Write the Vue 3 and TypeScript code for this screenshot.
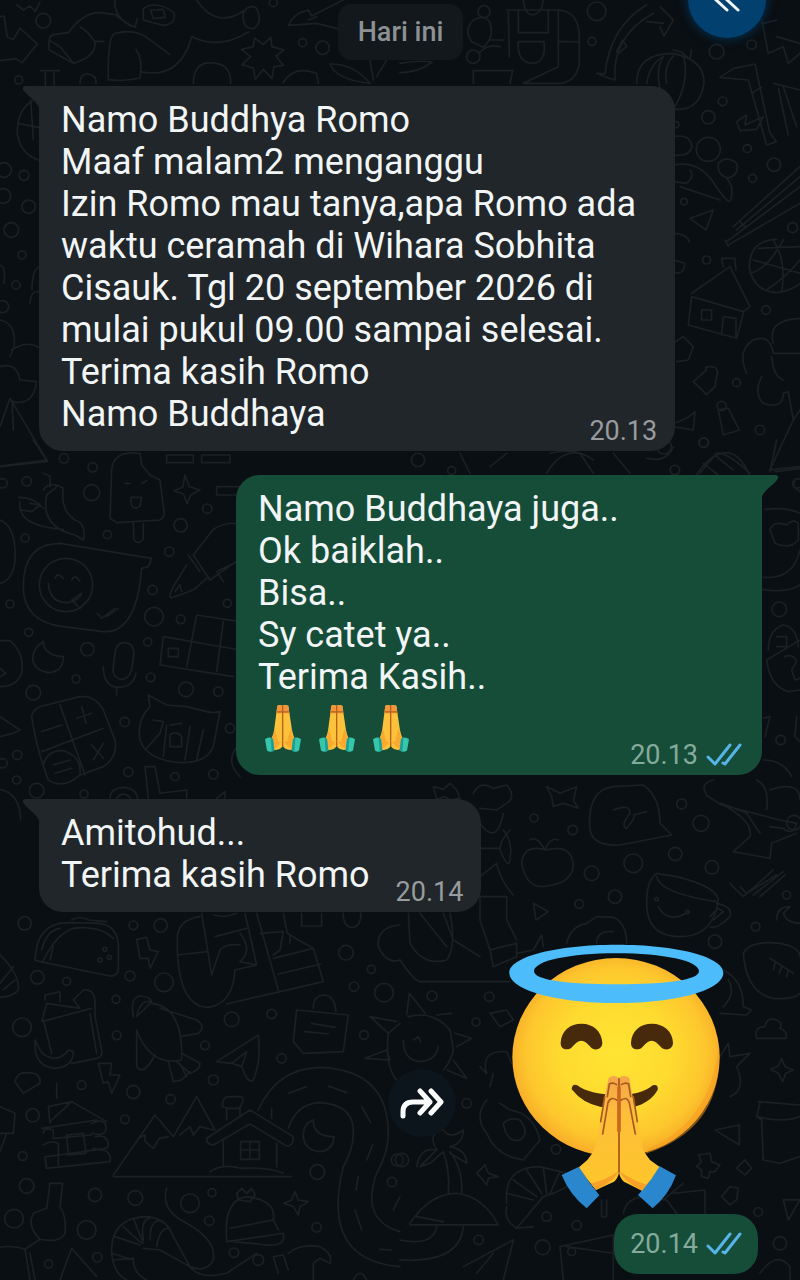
<script setup lang="ts">
interface Message {
  id: number
  side: 'in' | 'out'
  lines: string[]
  hands: number
  time: string
}

interface DoodlePatch {
  x: number
  y: number
  paths: string[]
  dots: [number, number, number][]
}

const messages: Message[] = [
  {
    id: 1,
    side: 'in',
    lines: [
      'Namo Buddhya Romo',
      'Maaf malam2 menganggu',
      'Izin Romo mau tanya,apa Romo ada waktu ceramah di Wihara Sobhita Cisauk. Tgl 20 september 2026 di mulai pukul 09.00 sampai selesai.',
      'Terima kasih Romo',
      'Namo Buddhaya',
    ],
    hands: 0,
    time: '20.13',
  },
  {
    id: 2,
    side: 'out',
    lines: ['Namo Buddhaya juga..', 'Ok baiklah..', 'Bisa..', 'Sy catet ya..', 'Terima Kasih..'],
    hands: 3,
    time: '20.13',
  },
  { id: 3, side: 'in', lines: ['Amitohud...', 'Terima kasih Romo'], hands: 0, time: '20.14' },
]

const doodles: DoodlePatch[] = [
  {
    x: 0,
    y: 0,
    paths: [
      'M0 50L12 48L22 112L40 118L60 84L112 132L66 188L48 176L0 182',
      'M50 14L70 30L90 18L106 34L120 6M345 0Q340 56 405 82L412 56M205 98Q250 36 300 38L345 44L392 78',
      'M205 98L160 104Q142 110 148 150L220 190Q290 170 285 125Q262 92 240 80M150 122L180 140L220 188M285 125L312 124',
      'M325 240Q322 110 345 100Q400 86 440 112L510 164M408 148Q430 180 420 234Q360 246 325 238M420 215Q540 240 575 110Q660 150 745 96',
      'M430 25Q470 0 522 38Q530 72 490 76L430 60ZM452 30L490 28L496 52L460 56ZM590 0Q650 90 735 30M730 40Q745 10 770 25Q790 70 760 86Q725 86 730 40',
      'M580 250Q580 190 630 188Q695 190 692 250M865 76Q880 40 925 30L935 48L1030 0M865 76L950 70L1020 88M925 60L950 50',
      'M760 140L764 114L790 134L812 112L816 140L852 150L828 168L850 196L822 200L816 236L790 208L766 238L760 204L726 194L752 170L724 148Z',
      'M850 248Q880 195 950 220L955 250M990 192Q1060 190 1110 250Q1010 240 990 192ZM1120 240L1110 180M1130 230L1160 180',
      'M122 212H178M136 216V255M162 216V255M240 250Q240 220 265 222Q290 226 288 250',
      'M100 300Q50 330 52 400Q60 460 115 480M55 370L115 382M92 300L100 420',
    ],
    dots: [[130, 62, 22], [56, 240, 12], [908, 128, 12], [968, 143, 20], [820, 8, 12], [12, 510, 22], [72, 526, 15], [10, 588, 22], [86, 620, 20], [34, 690, 22], [66, 765, 12], [48, 855, 12], [8, 920, 18]],
  },
  {
    x: 0,
    y: 260,
    paths: ['M0 15Q18 20 12 70M0 180Q50 190 42 260L30 290M35 270Q80 240 116 262M0 320Q50 305 60 360M65 360L110 365Q100 440 35 425M0 500L30 415L140 600L0 618M36 420L40 510M96 90Q96 30 118 20M90 130Q92 90 118 95'],
    dots: [],
  },
  {
    x: 400,
    y: 0,
    paths: [
      'M0 190Q60 180 96 186Q60 216 0 218M370 0Q375 46 400 45Q425 40 430 0M320 30H470Q540 30 538 120V190Q530 245 480 250H370L475 200V30M325 35L328 170M355 30V98H445V30M355 125H432Q440 190 395 190Q350 185 355 125ZM475 124L538 126',
      'M272 70Q255 40 220 60Q190 90 215 125L250 142Q285 110 270 70M270 120H312M238 160Q260 130 300 140M220 250V212H338L330 250',
      'M590 220L615 222Q630 80 740 14M600 225L645 240Q635 110 760 40M650 155L668 120L680 140L655 160ZM780 20L820 60L792 108L780 80M740 65L790 70',
      'M710 250Q710 160 820 160Q915 180 912 250Q900 330 830 328Q770 320 745 260M740 250Q750 190 790 170M800 250Q790 200 820 168M850 165Q870 240 825 320M790 170Q760 220 790 290',
      'M820 150L845 156L870 178L875 150M960 232L1000 206L1065 192L1110 400L1130 425L1100 435L1045 240L960 232M1055 280L1085 262M1010 365L1040 345L1035 375L1090 350L1070 388L1020 392ZM1120 250L1200 270M1135 265L1165 405M1150 260L1190 380M1085 60L1105 160L1150 140L1165 190L1200 160M1130 110L1200 130M1090 70L1130 60',
      'M820 410Q870 400 876 440Q870 470 825 465M820 495Q900 480 945 555Q990 620 992 600Q1005 560 980 535M820 545L860 550Q885 530 870 510M840 560L960 600M955 490Q980 465 1010 490Q1018 525 985 534Q950 525 955 490Z',
      'M870 655L940 630L918 690ZM1000 680L1200 500M1010 690L1200 530M980 725L1200 560M985 735L1200 610M975 720L985 740M1020 665L1035 680',
      'M1130 718Q1050 720 1048 800Q1060 875 1130 878Q1180 870 1200 850M1060 780L1200 820M1075 745L1200 740M1120 720Q1160 780 1145 878M1050 820Q1100 810 1150 720M1100 870Q1160 830 1200 780',
      'M875 880L990 800L1050 920L1030 935L875 890L865 975L1010 1015L1030 940M905 930H935V960H905ZM965 1005L970 950L1008 955V1012M970 800L965 775H1005L1008 810',
      'M1040 1120Q1010 1050 1060 1020Q1110 1000 1120 1060Q1140 1060 1200 1060M1120 1030Q1100 960 1200 955M1115 1070Q1120 1130 1150 1140M1085 1130Q1060 1180 1090 1210Q1150 1230 1150 1180L1165 1175L1180 1260L1200 1230M1180 1260L1110 1410L1200 1400',
      'M820 1030L850 1010L880 1040L865 1080L830 1085M880 1145L920 1110Q910 1100 930 1100Q960 1100 950 1130L945 1160L920 1184ZM820 1280L880 1290L885 1235Q860 1260 820 1270M955 1230L985 1225L1018 1290L970 1305ZM820 700Q860 700 868 725M820 780L855 790Q850 830 820 815',
      'M180 1360L210 1420M270 1400L320 1360M440 1420Q480 1350 540 1360L580 1420M450 1360Q530 1340 580 1380M640 1360L690 1420M900 1420L950 1360Q980 1355 1050 1420M820 1340Q800 1390 740 1375',
    ],
    dots: [[590, 34, 28], [576, 124, 12], [252, 35, 18], [220, 170, 20], [968, 304, 13], [925, 352, 20], [925, 448, 36], [828, 374, 9], [1042, 446, 12], [1122, 494, 20], [1058, 535, 12], [852, 605, 10], [1178, 683, 15], [920, 780, 12], [1098, 930, 13], [1010, 1148, 12], [965, 1218, 14], [1080, 1290, 14], [910, 1328, 14], [54, 1380, 20], [155, 1412, 12], [1055, 134, 14], [950, 155, 22]],
  },
  {
    x: 0,
    y: 440,
    paths: [
      'M100 0L142 64L0 80M500 45H580V68H500ZM605 45H690V68H605ZM720 140H650V165H720',
      'M420 40Q340 30 335 90L330 235L350 248L480 240Q498 230 490 200L480 120L450 105L425 75ZM400 250L402 300Q415 315 430 298V250M392 172L395 198Q408 210 420 198L425 172ZM375 130H392M425 130L440 122',
      'M55 172Q100 170 130 205M60 185Q50 260 190 268M65 210L95 215L120 195L90 190M130 150Q150 120 190 145Q180 210 225 240Q260 250 250 300L225 285Q120 260 140 165L170 140M130 100L150 108V140',
      'M555 105L568 140L600 150L572 165L562 190L550 162L522 152L548 142Z',
      'M70 440Q70 310 180 310L455 355L445 380L425 385Q410 580 310 575L190 560Q70 545 70 440ZM145 430Q150 490 205 488Q240 480 245 460L215 480L240 505L268 475M165 415Q170 395 190 415M215 420Q225 400 240 425M292 520L305 535L345 505M320 530L355 505',
      'M580 345L640 268Q690 240 720 255M580 345L630 420L700 370M565 345L600 395M560 375L520 440Q500 480 520 472L580 450L620 415M525 455L540 435L545 455M650 395L720 360M655 400L670 425',
      'M590 525L720 545M490 590L720 630M480 675L700 710M490 590L480 675M590 525L560 680M670 545L650 695M505 625H535V650H505Z',
      'M130 605Q130 645 190 650Q190 695 145 698Q100 690 98 655Q100 620 130 605M345 640Q350 605 375 608Q400 610 402 640L395 690Q385 720 360 718Q335 710 340 680ZM310 680Q310 740 355 742Q400 740 408 700M350 742V765M0 602H30Q75 640 65 700Q50 740 0 740M0 830L60 870L40 880L0 890M0 685L18 700L0 710',
      'M95 830Q100 800 140 795L240 770Q285 765 310 810L345 900Q355 950 310 980L240 1005Q190 1050 145 1020Q110 930 95 830ZM180 795L255 1005M125 935L310 865M125 875L185 855M230 835L275 820M245 800L258 850M275 915L310 955M310 910L280 960M130 975Q140 930 190 932Q245 950 240 1000M160 975L210 960M165 1000L215 985',
      'M445 765L450 800Q410 840 420 900Q440 960 540 968Q620 970 640 920L660 815Q640 820 620 815L560 800L500 795L445 765M460 840L490 845L480 880L440 925M500 855L490 950M570 860L555 960M610 870L590 960M510 855L545 850M510 885Q530 870 545 890V920H510Z',
      'M720 910Q670 960 720 1010M435 980H465L480 1060L560 1050V1075M435 980L445 1075M330 1075Q330 1045 370 1042Q410 1045 412 1075M350 1075Q370 1050 392 1075M650 1075L675 1055V1075M0 1048Q60 1060 62 1140M0 240Q50 260 45 360Q40 420 0 430',
    ],
    dots: [[192, 55, 14], [278, 82, 14], [275, 158, 24], [80, 124, 14], [8, 130, 14], [75, 294, 12], [322, 284, 12], [542, 256, 20], [622, 206, 14], [508, 335, 14], [30, 492, 12], [458, 450, 14], [462, 530, 28], [542, 538, 13], [86, 577, 12], [262, 628, 20], [228, 717, 12], [443, 606, 12], [452, 712, 13], [558, 748, 22], [655, 755, 14], [100, 758, 22], [374, 846, 14], [52, 945, 14], [8, 970, 14], [50, 1020, 12], [385, 996, 14], [525, 1010, 12], [640, 1003, 14], [110, 1052, 22], [252, 1062, 12], [682, 490, 12], [690, 865, 14], [198, 435, 80]],
  },
  {
    x: 660,
    y: 440,
    paths: [
      'M350 0L330 95M110 105Q150 40 200 38Q240 40 268 105M130 70L175 105M170 50L220 90M315 208Q380 200 420 220M310 412Q400 420 420 330M306 448Q380 460 420 435M330 270Q340 240 380 255Q400 235 415 250V300Q390 330 345 310ZM325 630Q325 570 370 555Q410 560 415 620M350 590H380V620H350M320 660Q330 740 385 755L420 750M320 660L420 600M375 650Q400 640 410 665L395 690L405 720L420 715M310 835L330 830L315 890M410 830L405 890L420 905M310 960Q370 960 395 1010M405 120L400 140L420 155M345 95L420 85',
    ],
    dots: [[358, 508, 22], [362, 900, 14], [132, 8, 14], [45, 90, 14], [412, 130, 14], [12, 20, 22]],
  },
  {
    x: 0,
    y: 900,
    paths: [
      'M105 180Q110 70 200 68L300 70Q355 80 355 140V210Q350 230 330 228L120 185ZM130 182Q170 100 220 85Q300 75 340 115M125 150Q140 90 180 85M150 180L160 140M215 60Q240 45 265 60L320 65M0 165L15 180Q60 230 55 270Q40 290 0 292M0 250L40 200M10 270L45 240',
      'M410 118L440 112L450 150L475 155L450 205L445 175L420 175Z',
      'M605 40L635 225L660 150Q680 130 720 135M600 50Q530 60 532 120Q530 320 625 322Q700 310 705 210L770 195L735 40M532 165L620 155M645 110L740 85M640 45Q680 55 710 40M720 100Q760 150 720 185L770 195M770 40L835 270M780 100L850 95L840 150L820 165M850 40L862 100L895 120L940 145L970 245L680 312M820 175L940 145M835 222L962 192M905 40V78H965V40M1030 40Q1030 85 1060 82Q1085 75 1082 40M1200 75Q1130 80 1135 140Q1160 195 1200 180M870 110V130',
      'M125 365L140 310L240 325L220 300L250 270Q285 265 285 310V350L305 450Q310 470 290 475L215 490M125 365L275 325M130 360L155 460M270 340L290 460M135 300V285L180 275V305M105 420V445Q110 500 165 505Q220 500 220 455L205 450Q190 475 160 475Q130 470 120 450Z',
      'M400 350Q390 290 420 288Q450 290 455 305L415 345M410 350Q420 300 450 305M455 310Q550 320 545 480Q450 500 410 390V500Q430 530 465 465M480 325L590 360Q620 380 595 400L540 410M545 460L600 490Q600 510 570 520L530 485M505 485L520 545L545 540L570 515M540 490L560 530',
      'M650 485L775 405Q785 480 760 540Q745 555 725 500L695 490L650 485M725 500L740 455L695 490M890 330L1045 345L1030 455L910 460L880 425ZM940 325Q940 285 975 285Q1005 290 1008 335M935 370L1005 382M915 395L985 402M1110 350L1190 365M1110 350L1165 400L1200 370M1095 475L1160 450L1170 480ZM1165 400Q1155 500 1190 540',
      'M45 545Q50 515 85 518Q125 520 120 550L70 580ZM295 490H335L330 525L360 525L335 580L325 545L310 550ZM170 550V595M145 620L215 605L320 665M145 620L150 670M215 605L150 665M125 685L290 660M130 700Q130 680 160 690V715L275 705M130 735Q150 720 175 730V765L320 745M135 770L140 805L330 785Q335 750 300 750M200 705L250 700L258 760L205 765ZM275 670Q320 650 318 690Q310 710 275 700M285 710Q325 700 325 740Q300 755 280 745M0 620L45 640L40 700H0M18 705L0 755M140 770L175 765V800',
      'M340 830H875M340 825L465 645L520 710L590 590L645 690M415 715L435 705V725L460 745L478 715L505 710M540 705L570 680L580 705L600 680L640 690M620 715L750 630L880 710Q880 740 860 738L750 672L640 735Q620 735 620 715ZM670 720V800M830 730V800M722 725H778V778H722ZM750 725V778M722 750H778M630 815Q670 790 720 805Q800 800 850 820M680 660V625L668 620Q665 590 690 590H725Q735 600 720 620V645M680 625H720',
      'M775 630Q830 505 960 502Q1165 510 1165 700Q1165 760 1130 820Q1080 960 1200 995M865 685Q890 610 960 608Q1065 615 1060 700Q1060 750 1030 800Q960 1080 1200 1100M865 580L920 560M985 558L1040 578M1085 620L1112 668M1118 735L1100 780M1075 830L1068 870M1065 930L1085 990M1140 1048L1175 1050M815 625V655M940 660Q940 710 1002 710Q1000 750 960 755Q910 750 910 705Q910 670 940 660',
      'M150 850H188L180 920Q200 950 195 1000Q180 1030 120 1018Q80 980 100 940L140 925ZM0 1042Q40 1035 75 1048L120 1018M75 1048L90 1140M90 1060L105 1140M180 1140L215 1045L290 1130M500 865Q480 930 560 970Q650 1020 640 1080Q620 1120 570 1100M335 1060Q330 960 430 950Q500 950 520 1010L570 1100Q600 1140 680 1120L770 1060M335 1060L400 1080Q400 1120 440 1140M335 1060Q340 1120 380 1140M345 1010L420 1035M370 980L425 1030M400 955L430 1030M450 1020Q450 950 490 965M430 1020Q420 960 450 955M470 1040Q480 980 510 985M340 1080L400 1075M430 1045L480 1050L570 1100',
      'M680 1020Q670 900 740 890Q830 900 820 960M680 1025L850 1000Q860 1040 800 1035L700 1025M690 985L820 960L835 990M710 880L725 865L740 880L755 865L765 885L750 905L715 900ZM885 875L895 900L925 905L900 920L895 945L880 920L852 910L875 900ZM820 1070L835 1120M820 1070L850 1065L865 1110M865 1060Q900 1030 960 1040Q1000 1060 990 1090L960 1075L940 1090V1140M1060 1140Q1080 1100 1100 1140M1180 930L1200 890',
    ],
    dots: [[74, 70, 20], [400, 76, 13], [482, 76, 20], [112, 232, 20], [200, 244, 12], [390, 228, 15], [492, 247, 28], [348, 298, 12], [350, 406, 13], [66, 382, 28], [695, 358, 22], [815, 342, 14], [615, 436, 13], [845, 475, 14], [640, 540, 15], [245, 555, 13], [400, 576, 20], [512, 598, 14], [98, 646, 20], [375, 658, 13], [68, 768, 13], [80, 858, 22], [285, 885, 20], [406, 894, 22], [570, 910, 28], [636, 878, 12], [628, 962, 14], [42, 956, 28], [260, 990, 28], [292, 1072, 14], [146, 1092, 12], [952, 816, 22], [950, 982, 14], [702, 1058, 14], [775, 1080, 16], [1038, 158, 22], [1114, 208, 12], [1062, 260, 14], [1152, 278, 28], [1092, 405, 13], [1192, 780, 18], [1176, 846, 14], [315, 148, 6], [300, 180, 6], [328, 172, 6]],
  },
  {
    x: 400,
    y: 780,
    paths: [
      'M100 20L130 28L150 10L170 30L180 55L150 60L135 50L110 58ZM220 40Q240 0 280 25L320 15Q350 50 320 70L290 90L240 85M440 20L480 40L530 20L520 60L535 85L490 70L460 80L455 50ZM570 150Q560 30 640 20L730 15Q780 50 780 130L815 165L660 195Q580 200 570 150ZM640 90Q690 70 690 100Q660 140 680 145Q710 110 700 105L740 95',
      'M918 40Q900 10 940 0M918 45L965 75L1140 120L1190 130Q1180 170 1150 145L1110 140M960 70Q1060 120 1050 170L1000 215L1110 235L1115 190L1190 160M1100 90Q1110 20 1070 0M965 70L1040 100L1080 160M1110 30Q1200 0 1200 60M990 310L1030 350L1120 270M1020 320L1040 340L1130 285M1060 345L1150 275M1080 350L1155 285M1130 420Q1130 380 1170 380L1150 400Q1160 430 1200 430',
      'M440 210Q370 190 365 250Q380 330 440 318Q520 310 520 250Q510 190 440 210ZM390 180Q410 165 435 210Q450 170 475 180M740 370Q740 300 770 280L830 290Q950 320 955 360Q940 470 840 470Q740 470 740 370ZM770 290Q780 340 950 365M775 380Q800 430 860 400M950 370Q1000 380 990 410Q950 450 930 440M930 410L955 385L970 395L940 420',
      'M240 130Q290 200 310 100M330 150Q300 180 300 210Q330 280 330 230Q340 190 310 150M240 205H300M240 290L290 250Q300 300 340 345M230 350H320M240 350V420L270 510M320 350V420L350 480M270 510L350 490V530L280 560ZM25 400L30 490Q70 560 140 540Q170 500 150 400M60 400L140 500M0 540Q40 600 60 605H330M350 520L400 510L425 465L430 500M130 400L160 480L240 530M400 370L445 395L408 420Z',
      'M500 490Q510 440 560 430L590 410L640 412Q680 430 680 490M590 490Q590 450 640 455M1030 520Q1050 480 1140 490Q1200 500 1200 530M1030 520Q1040 640 1120 655Q1180 660 1200 640M1110 535L1180 580M1125 550L1120 570M1145 560L1138 580M1165 570L1160 590M970 570Q1030 600 1030 680L1055 690L1040 705L960 700M985 600Q1010 640 970 680',
      'M25 710Q100 690 150 750L160 810Q150 850 130 870M20 705L28 640L75 700M155 700L110 705M165 760L215 775L170 800M160 840L200 895L140 870M10 780Q10 840 60 845Q110 840 115 800M40 780L55 770L62 785M270 700L320 690L340 720L300 740ZM1070 775Q1060 740 1095 740Q1100 710 1130 720Q1150 730 1140 745Q1165 755 1158 775ZM1145 835L1155 860L1180 870L1158 880L1148 905L1135 880L1112 868L1135 858ZM960 830L985 790L990 830L1050 820L1010 860Q1040 930 990 950M240 860L260 880M260 880Q240 810 320 815L335 850M270 920L280 880',
      'M260 960Q220 1010 260 1060Q290 1130 370 1140L420 1080Q400 1000 330 990L300 970M310 1030Q330 1010 360 1020Q390 1060 360 1080Q320 1090 310 1030M1075 965L1200 975M1080 970L1070 1010L1085 1020L1090 1140L1140 1150L1200 1130M1070 1010Q1150 1030 1200 1010M945 1050L1018 1035V1095ZM890 1160L905 1145L895 1125L930 1120L935 1145L960 1155L945 1175L930 1175L925 1195L905 1190L905 1170ZM1010 1165L1035 1140L1055 1165L1035 1185ZM965 1250L990 1220L1015 1225L1010 1260L990 1275ZM1150 1260L1200 1260L1165 1320Z',
      'M50 1160Q60 1100 110 1110Q80 1060 130 1050Q150 1080 190 1050Q190 1090 150 1100Q200 1110 200 1150L150 1120M110 1110L60 1160L90 1150L130 1115M130 1115Q150 1170 145 1240M150 1115Q190 1170 185 1240M30 1330Q90 1240 170 1240Q250 1250 295 1335H30M50 1310L130 1325M190 1340Q180 1450 0 1440M0 1380Q100 1400 110 1340M230 1180L255 1155L265 1180L295 1190L265 1195L260 1215L245 1195Z',
      'M320 1270Q310 1160 420 1160L540 1190Q500 1230 430 1250L350 1345M320 1240L400 1260M340 1200L410 1250M380 1170L425 1240M430 1165L440 1240M480 1175L450 1240M320 1280Q310 1320 350 1345L400 1340M670 1300Q680 1250 740 1250L800 1260L830 1300M790 1260L850 1210M820 1240L915 1230V1300M190 1460L340 1380L310 1500M230 1480L280 1420M490 1500L480 1400L640 1365V1500M500 1400L640 1420M605 1260V1310H620V1260M1080 1480Q1130 1410 1170 1460V1500',
    ],
    dots: [[845, 72, 15], [903, 130, 24], [518, 150, 14], [402, 114, 12], [826, 222, 20], [700, 250, 28], [936, 262, 20], [645, 350, 20], [538, 372, 13], [575, 280, 22], [1160, 345, 12], [1067, 440, 13], [945, 485, 20], [1182, 128, 22], [96, 648, 15], [268, 650, 14], [228, 726, 12], [200, 970, 14], [468, 1108, 14], [440, 1310, 14], [530, 1336, 14], [236, 1380, 14], [428, 1402, 22], [1075, 1296, 13], [1140, 1390, 20], [6, 1140, 20], [770, 358, 5], [862, 396, 5], [515, 1415, 12]],
  },
]
</script>

<template>
  <main class="chat">
    <svg class="wallpaper" viewBox="0 0 800 1280" preserveAspectRatio="xMidYMin slice" aria-hidden="true">
      <g v-for="(patch, p) in doodles" :key="p" :transform="`translate(${patch.x} ${patch.y}) scale(0.3333)`">
        <path v-for="(d, i) in patch.paths" :key="`p${i}`" :d="d" />
        <circle v-for="(c, i) in patch.dots" :key="`c${i}`" :cx="c[0]" :cy="c[1]" :r="c[2]" />
      </g>
    </svg>

    <button class="jump" type="button" aria-label="Scroll">
      <svg viewBox="0 0 80 80" aria-hidden="true">
        <path d="M39 25L26 38L39 50M50 25L37 38L50 50" />
      </svg>
    </button>

    <div class="day">Hari ini</div>

    <article v-for="m in messages" :key="m.id" class="bubble" :class="m.side">
      <svg class="tail" viewBox="0 0 18 24" aria-hidden="true">
        <path d="M18 0H4Q0 0 1 3Q2 6 8 11Q16 17 18 24Z" />
      </svg>
      <div class="text">
        <p v-for="(line, i) in m.lines" :key="i">{{ line }}</p>
        <div v-if="m.hands" class="hands">
          <svg v-for="n in m.hands" :key="n" viewBox="0 0 108 144" role="img" aria-label="Folded hands">
            <path d="M37 4Q43 -1 52 4Q61 -1 70 4L79 64Q82 90 92 108L80 136Q60 138 53 124Q47 138 27 136L16 108Q27 90 29 64Z" fill="#fdc23b" />
            <path d="M37 4Q43 0 52 4Q61 0 70 4L73 26H34Z" fill="#f2953c" />
            <path d="M53 4V126M35 22H72" fill="none" stroke="#b8601c" stroke-width="4" />
            <path d="M30 72Q26 96 18 106L26 134Q42 124 53 108Q64 124 80 134L89 106Q80 92 77 72L66 112H40Z" fill="#f89b27" opacity=".65" />
            <path d="M0 104Q12 94 24 103L28 138Q16 146 6 138ZM108 104Q96 94 84 103L80 138Q92 146 102 138Z" fill="#35c6ac" />
            <path d="M17 100L24 103L28 138L20 141ZM91 100L84 103L80 138L88 141Z" fill="#1b9d95" />
          </svg>
        </div>
      </div>
      <div class="meta">
        <time>{{ m.time }}</time>
        <svg v-if="m.side === 'out'" class="ticks" viewBox="0 0 36 24" role="img" aria-label="Read">
          <path d="M2 14L9 21L24 2M17 20L19 21L34 2" />
        </svg>
      </div>
    </article>

    <section class="sticker">
      <button class="forward" type="button" aria-label="Forward">
        <svg viewBox="0 0 44 32" aria-hidden="true">
          <path d="M3 29V25Q3 15 13 15H30M20 4L30 15L20 26M31 4L41 15L31 26" />
        </svg>
      </button>
      <svg class="emoji" viewBox="54 42 648 795" role="img" aria-label="Smiling face with halo and folded hands">
        <defs>
          <radialGradient id="skin" cx="50%" cy="48%" r="53%">
            <stop offset="0" stop-color="#ffe433" />
            <stop offset=".5" stop-color="#fedb2f" />
            <stop offset=".82" stop-color="#fdc62d" />
            <stop offset="1" stop-color="#f7a928" />
          </radialGradient>
          <linearGradient id="palm" x1="0" y1="0" x2="0" y2="1">
            <stop offset="0" stop-color="#f3a44a" />
            <stop offset=".35" stop-color="#fdbf3a" />
            <stop offset="1" stop-color="#ffc629" />
          </linearGradient>
        </defs>
        <ellipse cx="378" cy="382" rx="311" ry="298" fill="url(#skin)" />
        <path d="M686 340Q708 595 465 672L478 655Q668 570 686 340Z" fill="#f7991e" opacity=".5" />
        <path fill-rule="evenodd" d="M380 44C560 44 700 80 700 128C700 180 560 219 380 219C200 219 58 180 58 128C58 80 200 44 380 44ZM380 70C240 70 132 92 132 124C132 150 230 163 380 163C530 163 627 150 627 124C627 92 520 70 380 70Z" fill="#4dbcfb" />
        <path d="M212 338C214 302 240 281 275 281C310 281 335 304 337 338C337 360 311 364 301 350C292 340 284 332 274 332C264 332 256 340 247 350C237 363 211 361 212 338ZM423 338C425 302 451 281 486 281C521 281 548 304 549 338C549 360 523 364 512 350C503 340 495 332 485 332C475 332 467 340 458 350C448 363 422 361 423 338Z" fill="#472a0b" />
        <path d="M262 466C306 502 446 508 488 466Q506 462 503 480C470 536 400 544 330 530Q278 520 245 478Q246 460 262 466Z" fill="#472a0b" />
        <path d="M215 735L267 710Q296 756 328 796L290 835Q240 796 215 735ZM508 708L558 736Q536 796 488 835L444 795Q480 756 508 708Z" fill="#2a86cd" />
        <path d="M356 444Q372 432 386 444Q402 432 418 444L428 500L447 600Q452 660 480 690L508 710Q486 748 456 782L402 755Q392 748 387 728Q382 748 372 755L318 780Q290 748 267 712L292 690Q320 660 326 600L344 500Z" fill="url(#palm)" />
        <path d="M387 722Q374 752 318 780L303 760Q350 750 387 722ZM387 722Q400 752 456 782L470 764Q424 750 387 722Z" fill="#f7a128" />
        <path d="M387 445V728" stroke="#a8501c" stroke-width="5" />
        <path d="M387 470V605" stroke="#c9661f" stroke-width="11" />
        <path d="M352 500L358 462Q368 456 380 464M422 500L416 462Q406 456 394 464M380 510Q362 498 354 518L338 612M394 510Q412 498 418 518L436 612M344 500L332 575M430 500L442 575" fill="none" stroke="#a85a20" stroke-width="5" stroke-linecap="round" />
      </svg>
    </section>

    <div class="meta pill">
      <time>20.14</time>
      <svg class="ticks" viewBox="0 0 36 24" role="img" aria-label="Read">
        <path d="M2 14L9 21L24 2M17 20L19 21L34 2" />
      </svg>
    </div>
  </main>
</template>

<style>
html,
body {
  background: #0a0f13;
}
</style>

<style scoped>
.chat {
  position: relative;
  display: flex;
  flex-direction: column;
  min-height: 100vh;
  box-sizing: border-box;
  padding: 4px 38px 6px 39px;
  overflow: hidden;
  background: #0a0f13;
  color: #f2f5f6;
  font-family: Roboto, 'Noto Sans', sans-serif;
}

.wallpaper {
  position: absolute;
  inset: 0;
  width: 100%;
  height: 100%;
  fill: none;
  stroke: #1b2023;
  stroke-width: 5;
  stroke-linejoin: round;
  stroke-linecap: round;
}

button {
  border: 0;
  padding: 0;
  display: grid;
  place-items: center;
}

.jump {
  position: absolute;
  top: -40px;
  right: 34px;
  width: 78px;
  height: 78px;
  border-radius: 50%;
  background: #02416f;
  box-shadow: 0 0 8px 2px #032b4a;
}

.jump svg {
  width: 80px;
  height: 80px;
  fill: none;
  stroke: #f2f5f6;
  stroke-width: 3;
  stroke-linecap: round;
}

.day {
  position: relative;
  align-self: center;
  padding: 0 20px;
  border-radius: 14px;
  background: #12181b;
  color: #8d9193;
  font-size: 27px;
  font-weight: 500;
  line-height: 56px;
}

.bubble {
  position: relative;
  display: grid;
  box-sizing: border-box;
  margin-top: 24px;
  padding: 13px 18px 4px 22px;
  border-radius: 24px;
  max-width: 88%;
}

.day + .bubble {
  margin-top: 26px;
}

.in {
  align-self: flex-start;
  border-top-left-radius: 0;
  background: #202629;
  grid-template-columns: auto auto;
  column-gap: 26px;
  color: #f2f5f6;
}

.out {
  align-self: flex-end;
  min-width: 526px;
  border-top-right-radius: 0;
  padding-right: 20px;
  background: #164d39;
}

.text {
  padding-bottom: 12px;
  font-size: 36px;
  line-height: 42px;
}

.day + .bubble .text,
.day + .bubble .meta,
.out .text,
.out .meta {
  grid-area: 1 / 1;
}

.day + .bubble {
  grid-template-columns: auto;
}

.text p {
  margin: 0;
}

.meta {
  display: flex;
  align-items: center;
  align-self: end;
  justify-self: end;
  gap: 8px;
  color: #989c9e;
  font-size: 27px;
  line-height: 32px;
}

.out .meta,
.pill {
  color: #85ab9c;
}

.ticks {
  width: 36px;
  height: 24px;
  fill: none;
  stroke: #56b4e8;
  stroke-width: 3;
  stroke-linecap: round;
  stroke-linejoin: round;
}

.hands {
  display: flex;
  gap: 18px;
  padding: 6px 7px;
}

.hands svg {
  width: 36px;
  height: 49px;
}

.tail {
  position: absolute;
  top: 0;
  left: -17px;
  width: 18px;
  height: 24px;
  fill: #202629;
}

.out .tail {
  right: -17px;
  left: auto;
  transform: scaleX(-1);
  fill: #164d39;
}

.sticker {
  position: relative;
  display: flex;
  align-items: center;
  justify-content: flex-end;
  gap: 52px;
  margin-top: 32px;
  padding-right: 38px;
}

.emoji {
  width: 216px;
  height: 265px;
}

.forward {
  width: 68px;
  height: 68px;
  margin-top: 52px;
  border-radius: 50%;
  background: #0c151c;
}

.forward svg {
  width: 44px;
  height: 32px;
  fill: none;
  stroke: #fbfcfc;
  stroke-width: 5;
  stroke-linecap: round;
  stroke-linejoin: round;
}

.pill {
  position: relative;
  align-self: flex-end;
  margin: 5px 4px 0 0;
  padding: 14px 16px;
  border-radius: 24px;
  background: #164d39;
}
</style>
